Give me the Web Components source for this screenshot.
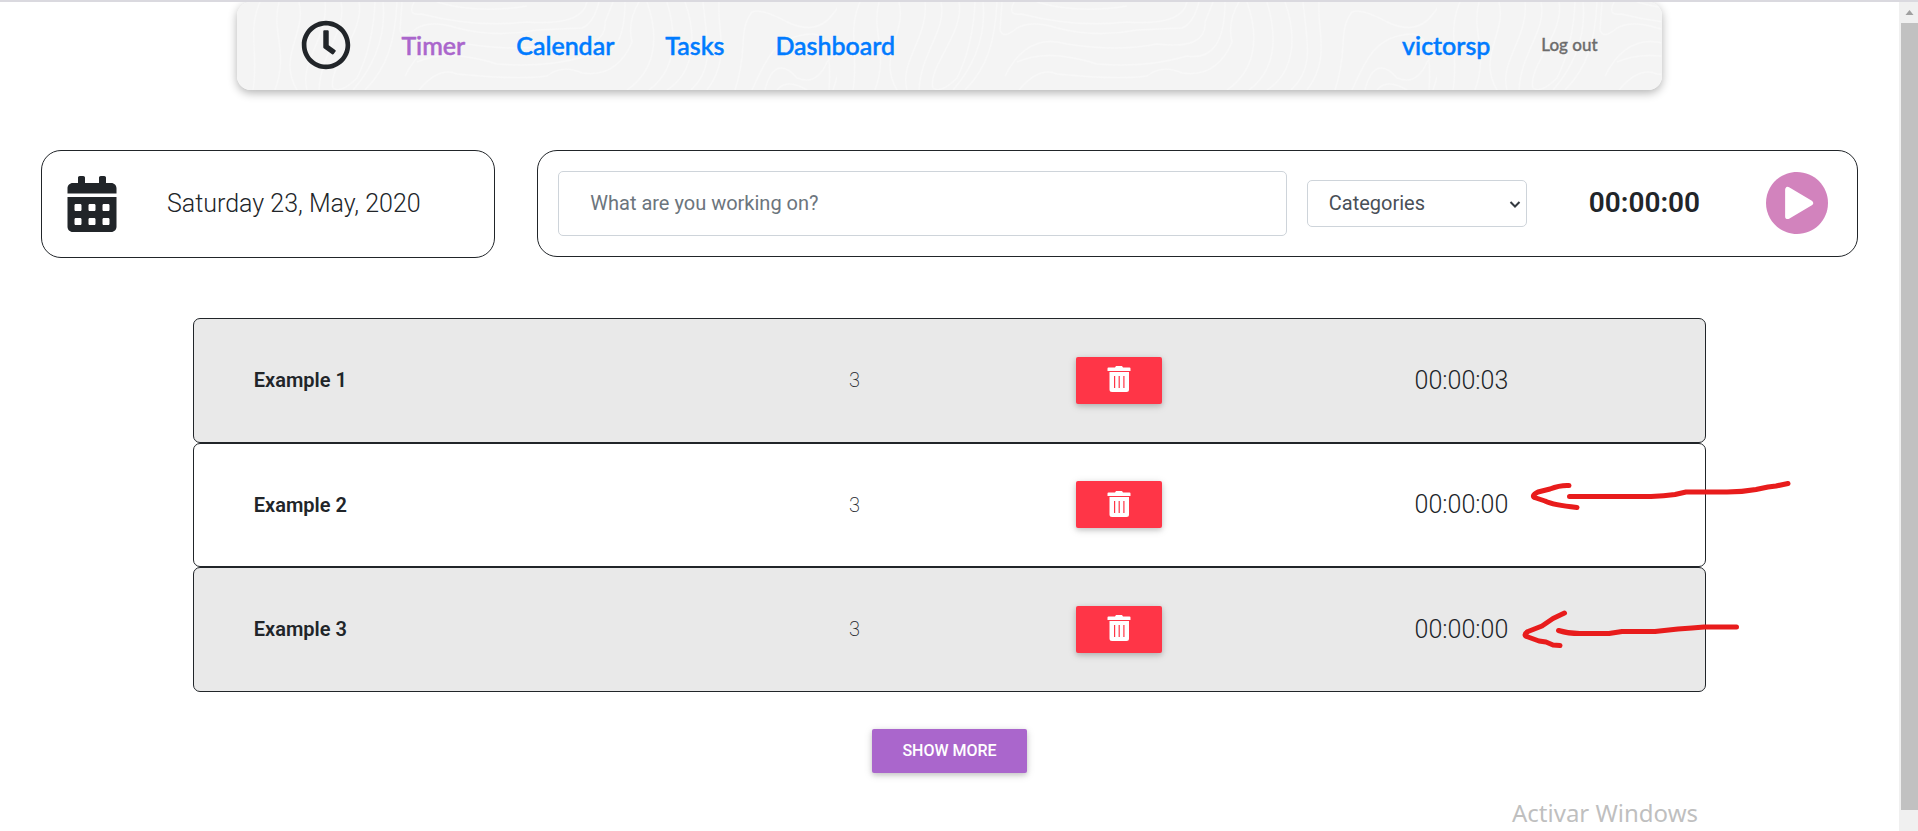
<!DOCTYPE html>
<html lang="en">
<head>
<meta charset="utf-8">
<title>Timer</title>
<style>
  html, body { margin: 0; height: 100%; }
  body { background: #fff; color: #212529; font-family: Roboto, "Liberation Sans", sans-serif; font-size: 20px; overflow: hidden; }
</style>
</head>
<body>
<timer-app></timer-app>

<template id="tpl-app">
  <style>
    :host { display: grid; grid-template-columns: minmax(0, 1fr) 19px; height: 100vh; box-sizing: border-box; border-top: 2px solid #dad9df; overflow: hidden; }
    main { display: flex; flex-direction: column; min-width: 0; }
    .top { display: flex; gap: 42px; padding: 60px 41px 0; align-items: flex-start; }
    date-card { flex: 0 0 25%; }
    tracker-bar { flex: 1; min-width: 0; }
    .list { position: relative; width: 79.7%; margin: 60px auto 0; }
    .more { display: flex; justify-content: center; margin-top: 37px; }
    .notice { align-self: flex-end; width: 387px; margin: 23px 0 0; color: #bfbfbf; font: 400 24px/34px "Noto Sans", "Open Sans", sans-serif; }
  </style>
  <main>
    <nav-bar></nav-bar>
    <div class="top"><date-card>Saturday 23, May, 2020</date-card><tracker-bar></tracker-bar></div>
    <div class="list">
      <task-row shaded count="3" time="00:00:03">Example 1</task-row>
      <task-row count="3" time="00:00:00">Example 2</task-row>
      <task-row shaded count="3" time="00:00:00">Example 3</task-row>
      <arrow-marks></arrow-marks>
    </div>
    <div class="more"><flat-button>SHOW MORE</flat-button></div>
    <p class="notice">Activar Windows</p>
  </main>
  <scroll-strip></scroll-strip>
</template>

<template id="tpl-nav">
  <style>
    :host { display: block; width: 75%; margin: 0 auto; border-radius: 14px; box-shadow: 0 3px 10px rgba(0,0,0,.3); }
    nav { position: relative; display: flex; align-items: center; height: 88px; box-sizing: border-box; padding: 0 64px 2px; border-radius: 14px; background: #f4f4f4; overflow: hidden; }
    .lines { position: absolute; inset: 0; width: 100%; height: 100%; }
    .clock { width: 50px; height: 50px; margin: 0 50px 0 0; position: relative; }
    a { position: relative; font: 500 25px/32px Lato, sans-serif; -webkit-text-stroke: .02em; color: #007bff; text-decoration: none; margin-right: 51px; }
    a.on { color: #aa66cc; }
    .user { margin-left: auto; }
    a.out { font-size: 17px; color: #6c6c6c; margin-right: 0; }
  </style>
  <nav>
    <svg class="lines" aria-hidden="true">
      <defs>
        <pattern id="topo" width="600" height="88" patternUnits="userSpaceOnUse">
          <g fill="none" stroke="#f8f8f8" stroke-width="1.4">
            <path d="M23 0C10 30 22 50 16 88M42 0C34 30 52 50 38 88M62 0C70 30 40 55 60 88M88 0C92 34 62 60 70 88M104 0C110 28 84 50 82 88M122 0C128 30 90 66 96 86Q104 92 120 76Q136 44 138 0M146 0C150 40 132 70 116 88M160 0C158 40 150 66 128 88"/>
            <path d="M165 0L163 28Q166 38 180 26Q195 18 220 26Q260 36 300 28L345 26Q356 22 362 0M177 0Q170 14 184 12Q240 26 290 20Q345 24 350 0M182 88Q202 64 220 72Q280 78 310 74Q325 62 345 71Q380 76 395 40Q390 20 402 0M168 74Q190 30 230 42Q280 50 320 42Q370 48 368 20L376 0M180 60Q210 46 260 62Q310 66 350 54Q388 60 388 0M200 0Q240 12 290 4"/>
            <path d="M410 0C424 40 416 70 390 88M430 0C442 40 436 70 412 88M448 0C460 34 458 70 430 88M466 0C470 40 478 66 454 88M482 0C480 30 494 56 470 88M498 88C512 46 500 30 515 10Q525 6 550 20Q580 34 596 12L605 0M515 88C530 54 540 34 574 32Q596 30 592 88M528 88C535 60 548 62 560 76Q580 84 590 60Q600 46 605 60L596 88M540 88Q550 76 570 88"/>
          </g>
        </pattern>
      </defs>
      <rect width="100%" height="100%" fill="url(#topo)"/>
    </svg>
    <svg class="clock" viewBox="0 0 512 512" fill="#212529" aria-hidden="true"><path d="M256 8C119 8 8 119 8 256s111 248 248 248 248-111 248-248S393 8 256 8zm0 448c-110.500 0-200-89.500-200-200S145.500 56 256 56s200 89.500 200 200-89.500 200-200 200zm61.800-104.400l-84.900-61.700c-3.100-2.300-4.900-5.900-4.900-9.700V116c0-6.600 5.400-12 12-12h32c6.600 0 12 5.400 12 12v141.700l66.800 48.600c5.400 3.900 6.500 11.400 2.600 16.800L334.600 349c-3.900 5.300-11.400 6.500-16.800 2.600z"/></svg>
    <a class="on" href="#timer">Timer</a><a href="#calendar">Calendar</a><a href="#tasks">Tasks</a><a href="#dashboard">Dashboard</a>
    <a class="user" href="#user">victorsp</a><a class="out" href="#logout">Log out</a>
  </nav>
</template>

<template id="tpl-date">
  <style>
    :host { display: flex; align-items: center; box-sizing: border-box; height: 108px; padding: 0 25px 1px; border: 1px solid #212529; border-radius: 20px; font-size: 25px; font-weight: 300; }
    svg { width: 50px; height: 56px; margin-right: 50px; }
  </style>
  <svg viewBox="0 0 448 512" fill="#212529" aria-hidden="true"><path d="M0 464c0 26.500 21.500 48 48 48h352c26.500 0 48-21.500 48-48V192H0v272zm320-196c0-6.600 5.400-12 12-12h40c6.600 0 12 5.400 12 12v40c0 6.600-5.400 12-12 12h-40c-6.600 0-12-5.400-12-12v-40zm0 128c0-6.600 5.400-12 12-12h40c6.600 0 12 5.400 12 12v40c0 6.600-5.400 12-12 12h-40c-6.600 0-12-5.400-12-12v-40zM192 268c0-6.600 5.400-12 12-12h40c6.600 0 12 5.400 12 12v40c0 6.600-5.400 12-12 12h-40c-6.600 0-12-5.400-12-12v-40zm0 128c0-6.600 5.400-12 12-12h40c6.600 0 12 5.400 12 12v40c0 6.600-5.400 12-12 12h-40c-6.600 0-12-5.400-12-12v-40zM64 268c0-6.600 5.400-12 12-12h40c6.600 0 12 5.400 12 12v40c0 6.600-5.400 12-12 12H76c-6.600 0-12-5.400-12-12v-40zm0 128c0-6.600 5.400-12 12-12h40c6.600 0 12 5.400 12 12v40c0 6.600-5.400 12-12 12H76c-6.600 0-12-5.400-12-12v-40zM400 64h-48V16c0-8.800-7.200-16-16-16h-32c-8.800 0-16 7.200-16 16v48H160V16c0-8.800-7.200-16-16-16h-32c-8.800 0-16 7.200-16 16v48H48C21.500 64 0 85.500 0 112v48h448v-48c0-26.500-21.500-48-48-48z"/></svg>
  <span><slot></slot></span>
</template>

<template id="tpl-tracker">
  <style>
    :host { display: flex; align-items: center; box-sizing: border-box; height: 107px; padding: 0 29px 1px 20px; border: 1px solid #212529; border-radius: 20px; }
    input, select { box-sizing: border-box; border: 1px solid #ced4da; border-radius: 5px; background: #fff; font: 400 20px/28px Roboto, sans-serif; color: #495057; margin: 0; }
    input { flex: 1; min-width: 0; height: 65px; padding: 0 31px; }
    input::placeholder { color: #6c757d; opacity: 1; }
    .pick { position: relative; margin: 0 62px 0 20px; }
    select { display: block; width: 220px; height: 47px; padding: 0 21px; appearance: none; }
    .pick svg { position: absolute; right: 6px; top: 20px; width: 12px; height: 9px; pointer-events: none; }
    output { font-size: 28px; font-weight: 600; line-height: 36px; margin-right: 66px; }
    button { display: block; width: 62px; height: 62px; padding: 0; border: 0; background: none; }
    button svg { display: block; width: 62px; height: 62px; }
  </style>
  <input type="text" aria-label="Task" placeholder="What are you working on?">
  <div class="pick"><select aria-label="Category"><option>Categories</option></select><svg viewBox="0 0 12 9" aria-hidden="true"><path d="M1.500 2L6 6.500 10.500 2" fill="none" stroke="#343a40" stroke-width="2"/></svg></div>
  <output>00:00:00</output>
  <button type="button" aria-label="Start"><svg viewBox="8 8 496 496" aria-hidden="true"><path fill="#d283bd" d="M256 8C119 8 8 119 8 256s111 248 248 248 248-111 248-248S393 8 256 8z"/><path fill="#fff" stroke="#fff" stroke-width="42" stroke-linejoin="round" d="M182 149V363L364 256z"/></svg></button>
</template>

<template id="tpl-row">
  <style>
    :host { display: grid; grid-template-columns: 41.7% 16.7% 16.6% 1fr; align-items: center; box-sizing: border-box; height: 125px; padding-bottom: 1px; border: 1px solid #212529; border-radius: 7px; background: #fff; }
    :host([shaded]) { background: #e9e9e9; }
    :host(:nth-of-type(2)) { height: 124px; }
    .name { font-weight: 600; padding-left: 60px; }
    .count { font-weight: 200; padding-left: 25px; }
    .time { font-size: 25px; font-weight: 300; text-align: right; padding-right: 197px; }
    button { display: flex; align-items: center; justify-content: center; width: 86px; height: 47px; padding: 0; border: 0; border-radius: 2px; background: #ff3547; box-shadow: 0 2px 5px rgba(0,0,0,.16), 0 2px 10px rgba(0,0,0,.12); }
    svg { width: 24px; height: 26px; margin-bottom: 2px; }
  </style>
  <span class="name"><slot></slot></span><span class="count"></span>
  <span><button type="button" aria-label="Delete"><svg viewBox="0 0 24 26" fill="#fff" aria-hidden="true"><path d="M9 0H15L16 1.500H22.500Q23.500 1.500 23.500 2.500V5H.5V2.500Q.5 1.500 1.500 1.500H8z"/><path fill-rule="evenodd" d="M2.500 6H22V23.500Q22 26 19.500 26H5Q2.500 26 2.500 23.500zM7 10V22H8.200V10zM11.600 10V22H12.800V10zM16.300 10V22H17.500V10z"/></svg></button></span>
  <span class="time"></span>
</template>

<template id="tpl-flat">
  <style>
    :host { display: block; }
    button { height: 44px; padding: 0 30px; border: 0; border-radius: 2px; background: #aa66cc; color: #fff; font: 500 16px/24px Roboto, sans-serif; box-shadow: 0 2px 5px rgba(0,0,0,.16), 0 2px 10px rgba(0,0,0,.12); }
  </style>
  <button type="button"><slot></slot></button>
</template>

<template id="tpl-arrows">
  <style>
    :host { position: absolute; left: 1320px; top: 160px; pointer-events: none; }
    svg { display: block; width: 280px; height: 170px; }
  </style>
  <svg viewBox="1513 478 280 170" fill="none" stroke="#e81c1c" stroke-width="5" stroke-linecap="round" stroke-linejoin="round" aria-hidden="true">
    <path d="M1569 485.500Q1560 485 1550 489L1538 492Q1530 496 1536 498L1545 501Q1553 505 1577 507.500M1569.500 496.500H1651Q1664 496 1675 494.500L1686 492H1727Q1742 492 1756 489.500L1768 487 1776 486 1788 483.500"/>
    <path d="M1564.500 613L1553 618.500 1542 626 1528 631.500Q1522 635 1528 637L1539 641 1546 642 1553 645 1560 645.500M1558.500 630.500Q1570 634 1583 633.500H1609L1622 631.500H1655L1678 629 1692 628 1704 627H1736.500"/>
  </svg>
</template>

<template id="tpl-scroll">
  <style>
    :host { display: flex; flex-direction: column; box-sizing: border-box; padding: 0 0 21px 2px; background: #f0f0f0; }
    .up { height: 21px; display: grid; place-items: center; }
    svg { width: 9px; height: 5px; }
    .thumb { flex: 1; background: #c1c1c1; }
  </style>
  <div class="up"><svg viewBox="0 0 8 5" aria-hidden="true"><path d="M4 0L8 5H0z" fill="#a0a0a0"/></svg></div>
  <div class="thumb"></div>
</template>

<script>
  class TemplateElement extends HTMLElement {
    constructor() {
      super();
      const t = document.getElementById(this.constructor.template);
      this.attachShadow({ mode: "open" }).append(t.content.cloneNode(true));
    }
  }
  const define = (name, template) =>
    customElements.define(name, class extends TemplateElement { static template = template; });

  class TaskRow extends TemplateElement {
    static template = "tpl-row";
    connectedCallback() {
      this.shadowRoot.querySelector(".count").textContent = this.getAttribute("count");
      this.shadowRoot.querySelector(".time").textContent = this.getAttribute("time");
    }
  }
  customElements.define("task-row", TaskRow);
  define("nav-bar", "tpl-nav");
  define("date-card", "tpl-date");
  define("tracker-bar", "tpl-tracker");
  define("flat-button", "tpl-flat");
  define("arrow-marks", "tpl-arrows");
  define("scroll-strip", "tpl-scroll");
  define("timer-app", "tpl-app");
</script>
</body>
</html>
